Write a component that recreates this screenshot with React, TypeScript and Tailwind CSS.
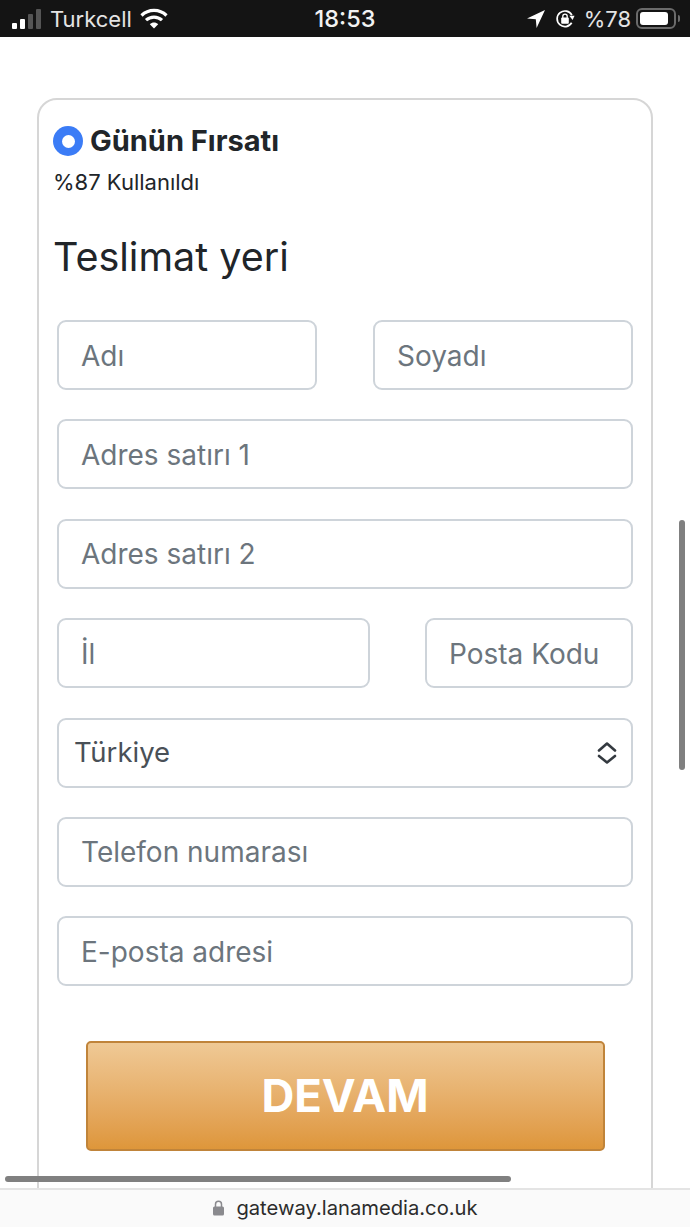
const inputClass =
  "block h-[70px] min-w-0 rounded-[9px] border-2 border-[#ced4da] bg-white px-[22px] pt-[1px] text-[28px] text-[#495057] outline-none placeholder:text-[#6c757d] placeholder:opacity-100";

function StatusBar() {
  return (
    <div className="flex h-[37px] shrink-0 items-center justify-between bg-[#141414] pl-[12px] pr-[10px] text-white">
      <div className="flex w-[238px] items-center">
        <div className="flex items-end gap-[3px]">
          <span className="h-[6px] w-[5px] rounded-[1px] bg-white" />
          <span className="h-[10px] w-[5px] rounded-[1px] bg-white" />
          <span className="h-[15px] w-[5px] rounded-[1px] bg-[#555555]" />
          <span className="h-[20px] w-[5px] rounded-[1px] bg-[#555555]" />
        </div>
        <span className="ml-[9px] text-[22px] leading-none text-[#e4e4e4]">Turkcell</span>
        <svg className="ml-[8px]" width="28" height="21" viewBox="0 0 28 21" fill="none" stroke="white" strokeWidth="3.2">
          <path d="M1.5 7.5C8.5 0.7 19.5 0.7 26.5 7.5" />
          <path d="M6 12.2C10.5 8 17.5 8 22 12.2" />
          <path d="M14 20.5L9.8 16.2C12.2 14 15.8 14 18.2 16.2Z" fill="white" stroke="none" />
        </svg>
      </div>
      <span className="text-[23.5px] font-medium leading-none text-[#f2f2f2]">18:53</span>
      <div className="flex w-[240px] items-center justify-end">
        <svg width="18" height="18" viewBox="0 0 18 18" fill="white">
          <path d="M18 0L0 8.6L8.8 9.2L9.6 18Z" />
        </svg>
        <svg className="ml-[10px]" width="20" height="20" viewBox="0 0 21 20" fill="none">
          <path d="M17.5 14A8.2 8.2 0 1 1 17.7 6" stroke="white" strokeWidth="1.8" />
          <path d="M15 6.5L20.5 6.5L18.5 11Z" fill="white" />
          <rect x="6.5" y="8.5" width="8" height="6.5" rx="1" fill="white" />
          <path d="M8.2 9V7.2A2.3 2.3 0 0 1 12.8 7.2V9" stroke="white" strokeWidth="1.4" />
        </svg>
        <span className="ml-[9px] text-[22px] leading-none text-[#e4e4e4]">%78</span>
        <div className="ml-[5px] flex h-[21px] w-[40px] items-center rounded-[6px] border-2 border-[#6b6b6b] p-[2px]">
          <span className="h-full w-[28px] rounded-[3px] bg-white" />
        </div>
        <span className="ml-[2px] h-[7px] w-[2px] rounded-r-sm bg-[#6b6b6b]" />
      </div>
    </div>
  );
}

export default function App() {
  return (
    <div className="relative flex h-[1227px] w-[690px] flex-col overflow-hidden bg-white font-['Inter',sans-serif]">
      <StatusBar />

      <div className="min-h-0 flex-1 overflow-hidden px-[37px] pt-[61px]">
        <div className="h-[1200px] w-[616px] rounded-[20px] border-2 border-[#d6d6d6] px-[14px] pt-[25px]">
          <div className="flex items-center">
            <span className="flex h-[30px] w-[30px] items-center justify-center rounded-full bg-[#3b7cf6]">
              <span className="h-[13px] w-[13px] rounded-full bg-white" />
            </span>
            <span className="ml-[7px] text-[29px] font-bold leading-[32px] text-[#212529]">Günün Fırsatı</span>
          </div>
          <p className="mt-[12px] text-[22px] leading-[26px] text-[#212529]">%87 Kullanıldı</p>
          <h4 className="mt-[38px] text-[39.5px] font-normal leading-[48px] text-[#212529]">Teslimat yeri</h4>

          <form className="ml-[4px] mt-[39px] flex w-[576px] flex-col gap-[29.4px]" onSubmit={(e) => e.preventDefault()}>
            <div className="flex justify-between">
              <input className={`${inputClass} w-[260px]`} placeholder="Adı" />
              <input className={`${inputClass} w-[260px]`} placeholder="Soyadı" />
            </div>
            <input className={`${inputClass} w-full`} placeholder="Adres satırı 1" />
            <input className={`${inputClass} w-full`} placeholder="Adres satırı 2" />
            <div className="flex justify-between">
              <input className={`${inputClass} w-[313px]`} placeholder="İl" />
              <input className={`${inputClass} w-[208px]`} placeholder="Posta Kodu" />
            </div>
            <div className="flex h-[70px] items-center justify-between rounded-[9px] border-2 border-[#ced4da] bg-white pl-[15px] pr-[14px] text-[27.5px] text-[#495057]">
              <span>Türkiye</span>
              <svg width="20" height="22" viewBox="0 0 20 22" fill="none" stroke="#343a40" strokeWidth="2.6" strokeLinecap="round" strokeLinejoin="round">
                <path d="M2 8.5L10 1.5L18 8.5" />
                <path d="M2 14L10 20.5L18 14" />
              </svg>
            </div>
            <input className={`${inputClass} w-full`} placeholder="Telefon numarası" />
            <input className={`${inputClass} w-full`} placeholder="E-posta adresi" />
            <button
              type="submit"
              className="mx-auto mt-[25px] h-[110px] w-[519px] rounded-[5px] border-2 border-[#c0843a] bg-gradient-to-b from-[#efc995] to-[#de963a] text-[45.5px] font-bold leading-none text-white"
            >
              DEVAM
            </button>
          </form>
        </div>
      </div>

      <div className="flex h-[39px] shrink-0 items-center justify-center gap-[11px] border-t-2 border-[#e4e4e4] bg-[#fafafa] pb-[1px] text-[20.2px] text-[#2c2c2c]">
        <svg width="13" height="16" viewBox="0 0 13 16" fill="#8a8a8e">
          <rect x="1" y="6.5" width="11" height="9" rx="1.5" />
          <path d="M3.5 7V4.2a3 3 0 0 1 6 0V7" fill="none" stroke="#8a8a8e" strokeWidth="1.5" />
        </svg>
        <span>gateway.lanamedia.co.uk</span>
      </div>

      {/* scrollbars sit over the page */}
      <div className="absolute left-[679px] top-[520px] h-[250px] w-[6px] rounded-full bg-[#808080]" />
      <div className="absolute left-[5px] top-[1176px] h-[6px] w-[506px] rounded-full bg-[#808080]" />
    </div>
  );
}
